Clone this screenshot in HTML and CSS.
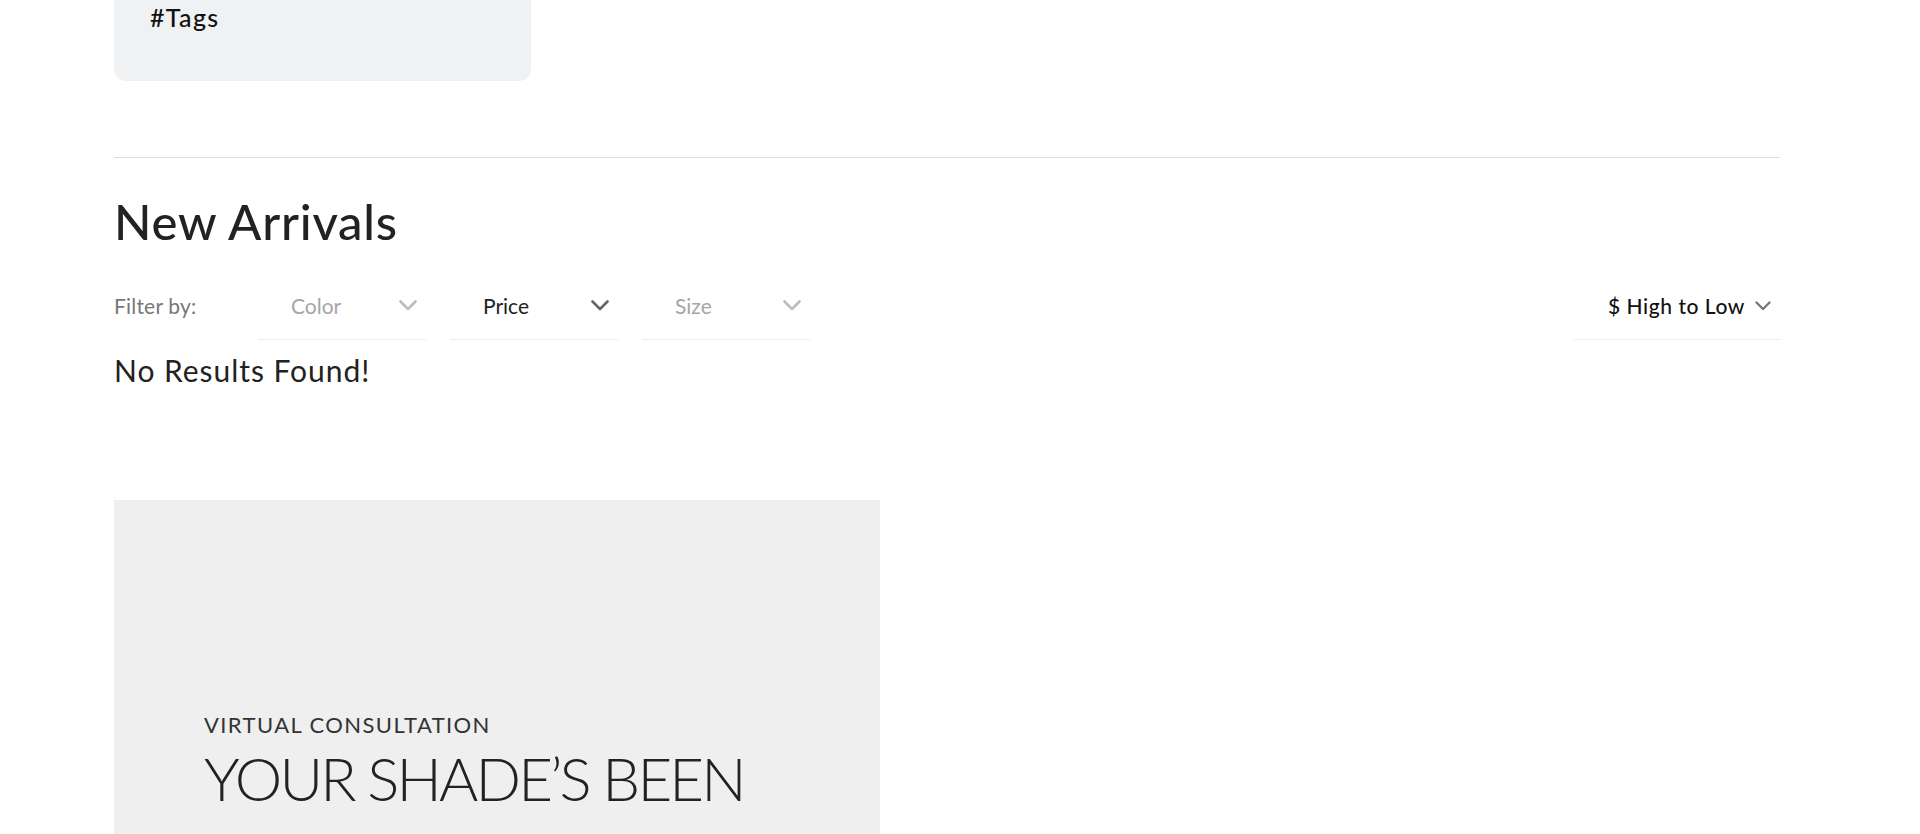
FILE: index.html
```html
<!DOCTYPE html>
<html lang="en">
<head>
<meta charset="utf-8">
<title>New Arrivals</title>
<link rel="stylesheet" href="styles.css">
</head>
<body>
<div class="page">
  <div class="tags-card">
    <span class="tags-title">#Tags</span>
  </div>

  <hr class="divider">

  <section class="arrivals">
    <h2 class="arrivals-title">New Arrivals</h2>

    <div class="filter-row">
      <span class="filter-label">Filter by:</span>

      <div class="select is-empty">
        <span class="select-text">Color</span>
        <svg class="chev" viewBox="0 0 18 11" width="18" height="11"><path d="M1.5 1.5 L9 9 L16.5 1.5" fill="none" stroke="currentColor" stroke-width="2.6" stroke-linecap="round" stroke-linejoin="round"/></svg>
      </div>

      <div class="select is-active">
        <span class="select-text">Price</span>
        <svg class="chev" viewBox="0 0 18 11" width="18" height="11"><path d="M1.5 1.5 L9 9 L16.5 1.5" fill="none" stroke="currentColor" stroke-width="2.6" stroke-linecap="round" stroke-linejoin="round"/></svg>
      </div>

      <div class="select is-empty">
        <span class="select-text">Size</span>
        <svg class="chev" viewBox="0 0 18 11" width="18" height="11"><path d="M1.5 1.5 L9 9 L16.5 1.5" fill="none" stroke="currentColor" stroke-width="2.6" stroke-linecap="round" stroke-linejoin="round"/></svg>
      </div>

      <div class="select sort">
        <span class="select-text">$ High to Low</span>
        <svg class="chev chev-sm" viewBox="0 0 16 10" width="16" height="10"><path d="M1.5 1.5 L8 8 L14.5 1.5" fill="none" stroke="currentColor" stroke-width="2.4" stroke-linecap="round" stroke-linejoin="round"/></svg>
      </div>
    </div>

    <p class="no-results">No Results Found!</p>
  </section>

  <section class="banner">
    <div class="banner-label">Virtual Consultation</div>
    <div class="banner-title">YOUR SHADE’S BEEN</div>
  </section>
</div>
</body>
</html>
```

FILE: styles.css
```css
html, body {
  margin: 0;
  padding: 0;
  background: #ffffff;
}

body {
  font-family: Lato, "Liberation Sans", sans-serif;
  color: #222222;
}

.page {
  width: 1666px;
  margin-left: 114px;
}

.tags-card {
  background: #f0f1f3;
  width: 417px;
  height: 81px;
  box-sizing: border-box;
  border-radius: 0 0 12px 12px;
  padding: 2px 0 0 36px;
}

.tags-title {
  display: block;
  font-size: 25px;
  line-height: 30px;
  font-weight: 500;
  letter-spacing: 1.3px;
  color: #111111;
}

.divider {
  border: 0;
  border-top: 1px solid #dddddd;
  margin: 76px 0 0 0;
  height: 0;
}

.arrivals-title {
  margin: 35px 0 0 0;
  font-size: 49px;
  line-height: 57px;
  font-weight: 500;
  letter-spacing: 0.8px;
  color: #222222;
}

.filter-row {
  display: flex;
  align-items: center;
  margin-top: 36px;
}

.filter-label {
  width: 144px;
  font-size: 21px;
  line-height: 24px;
  letter-spacing: 0.2px;
  color: #777777;
  padding-bottom: 14px;
}

.select {
  width: 168px;
  height: 54px;
  box-sizing: border-box;
  padding: 0 9px 14px 33px;
  border-bottom: 1px solid #eeeeee;
  display: flex;
  align-items: center;
  justify-content: space-between;
  margin-right: 24px;
}

.select-text {
  font-size: 21px;
  line-height: 24px;
}

.is-empty .select-text { color: #a6a6a6; }
.is-empty .chev { color: #bdbdbd; }

.is-active .select-text { color: #222222; }
.is-active .chev { color: #666666; }

.sort {
  width: 206px;
  margin-left: auto;
  margin-right: 0;
  padding-left: 34px;
  padding-right: 9px;
}

.sort .select-text {
  font-weight: 500;
  letter-spacing: 0.55px;
  color: #111111;
}

.sort .chev { color: #777777; }

.no-results {
  margin: 12px 0 0 0;
  font-size: 30px;
  line-height: 36px;
  font-weight: 400;
  letter-spacing: 0.95px;
  color: #222222;
}

.banner {
  margin-top: 112px;
  width: 766px;
  height: 560px;
  box-sizing: border-box;
  background: #efefef;
  padding: 211px 0 0 90px;
}

.banner-label {
  font-size: 22px;
  line-height: 28px;
  text-transform: uppercase;
  letter-spacing: 1.4px;
  color: #333333;
}

.banner-title {
  margin-top: 3px;
  font-size: 60px;
  line-height: 72px;
  font-weight: 300;
  letter-spacing: -2.85px;
  color: #222222;
}
```
